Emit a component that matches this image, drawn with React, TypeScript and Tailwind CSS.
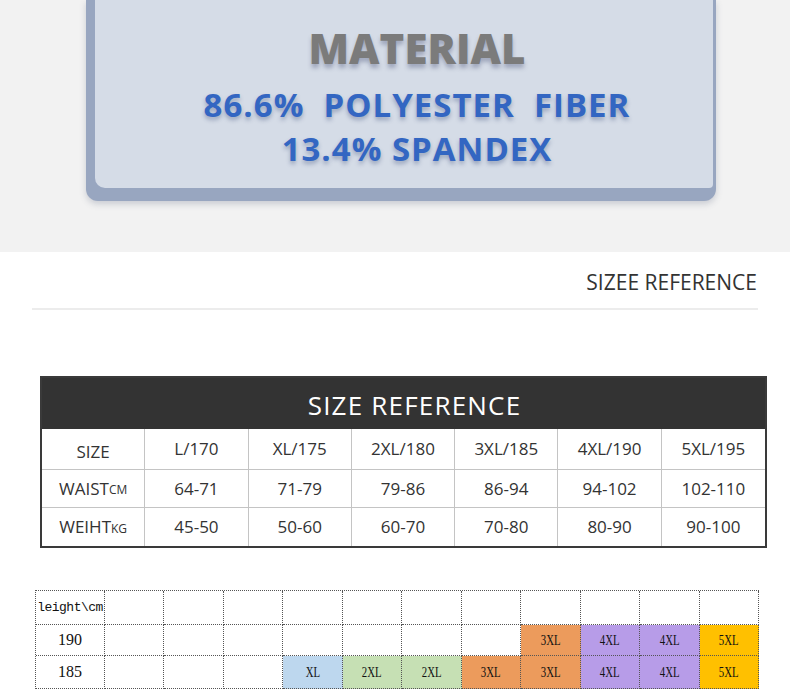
import React from "react";

const sizeCols = ["L/170", "XL/175", "2XL/180", "3XL/185", "4XL/190", "5XL/195"];
const waist = ["64-71", "71-79", "79-86", "86-94", "94-102", "102-110"];
const weight = ["45-50", "50-60", "60-70", "70-80", "80-90", "90-100"];

const colorMap: Record<string, string> = {
  XL: "bg-[#bdd7ee]",
  "2XL": "bg-[#c6e0b4]",
  "3XL": "bg-[#ec9b5c]",
  "4XL": "bg-[#b79ce8]",
  "5XL": "bg-[#ffc000]",
};

const gridRows: { label: string; cells: string[] }[] = [
  { label: "leight\\cm", cells: ["", "", "", "", "", "", "", "", "", "", ""] },
  { label: "190", cells: ["", "", "", "", "", "", "", "3XL", "4XL", "4XL", "5XL"] },
  { label: "185", cells: ["", "", "", "XL", "2XL", "2XL", "3XL", "3XL", "4XL", "4XL", "5XL"] },
];
const rowH = ["h-[34px]", "h-[31px]", "h-[33px]"];

export default function App() {
  return (
    <div className="w-[790px] h-[690px] overflow-hidden bg-white">
      {/* Material section */}
      <div className="h-[252px] bg-[#f2f2f2] pl-[86px]">
        <div className="w-[630px] h-[201px] bg-[#98a6c0] rounded-b-[12px] pl-[9px] pb-[13px] pr-[3px] shadow-[0_3px_6px_rgba(80,90,120,0.25)]">
          <div className="h-full bg-[#d5dce7] rounded-bl-[10px] rounded-br-[4px] flex flex-col items-center pt-[22px] pl-[26px]">
            <div className="font-['Open_Sans'] font-extrabold text-[42px] leading-[52px] text-[#7b7b7b] [text-shadow:0_4px_4px_rgba(60,70,110,0.35)]">
              MATERIAL
            </div>
            <div className="font-['Open_Sans'] font-bold text-[33px] leading-[44px] text-[#3366c2] mt-[9px] whitespace-pre tracking-[1px] [text-shadow:0_3px_4px_rgba(40,60,110,0.35)]">
              {"86.6%  POLYESTER  FIBER"}
            </div>
            <div className="font-['Open_Sans'] font-bold text-[33px] leading-[44px] text-[#3366c2] tracking-[1px] [text-shadow:0_3px_4px_rgba(40,60,110,0.35)]">
              13.4% SPANDEX
            </div>
          </div>
        </div>
      </div>

      {/* Sizee reference heading */}
      <div className="px-[32px] pt-[16px]">
        <div className="flex justify-end pr-[1px]">
          <span className="font-['Open_Sans'] text-[21px] leading-[28px] text-[#333]">
            SIZEE REFERENCE
          </span>
        </div>
        <div className="mt-[12px] h-[2px] bg-[#ececec]" />
      </div>

      {/* Size table */}
      <div className="mt-[66px] ml-[40px] w-[727px] border-2 border-[#3a3a3a] font-['Open_Sans'] text-[#333]">
        <div className="h-[51px] bg-[#333333] flex items-center justify-center">
          <span className="text-white text-[26px] tracking-[1.2px] leading-none pt-[2px] pl-[22px]">SIZE REFERENCE</span>
        </div>
        <div className="grid grid-cols-7 text-[17px]">
          <div className="h-[41px] flex items-end justify-center pb-[5px] border-r border-b border-[#c4c4c4]">SIZE</div>
          {sizeCols.map((s, i) => (
            <div
              key={s}
              className={`h-[41px] flex items-center justify-center border-b border-[#c4c4c4] ${i < 5 ? "border-r" : ""}`}
            >
              {s}
            </div>
          ))}
          <div className="h-[38px] flex items-center justify-center border-r border-b border-[#c4c4c4]">
            WAIST<span className="text-[12px] pt-[3px]">CM</span>
          </div>
          {waist.map((s, i) => (
            <div
              key={s}
              className={`h-[38px] flex items-center justify-center border-b border-[#c4c4c4] ${i < 5 ? "border-r" : ""}`}
            >
              {s}
            </div>
          ))}
          <div className="h-[38px] flex items-center justify-center border-r border-[#c4c4c4]">
            WEIHT<span className="text-[12px] pt-[3px]">KG</span>
          </div>
          {weight.map((s, i) => (
            <div
              key={s}
              className={`h-[38px] flex items-center justify-center border-[#c4c4c4] ${i < 5 ? "border-r" : ""}`}
            >
              {s}
            </div>
          ))}
        </div>
      </div>

      {/* Height chart */}
      <div className="mt-[42px] ml-[35px] w-[724px] grid grid-cols-[69px_repeat(11,1fr)] border-l border-t border-dotted border-[#555] font-['Liberation_Serif','Noto_Sans_CJK_SC',serif] text-[#111]">
        {gridRows.map((row, ri) => (
          <React.Fragment key={ri}>
            <div
              className={`${rowH[ri]} flex items-center justify-center border-r border-b border-dotted border-[#555] ${ri === 0 ? "font-['Liberation_Mono',monospace] text-[13px] tracking-[-0.5px]" : "text-[16px]"}`}
            >
              {row.label}
            </div>
            {row.cells.map((c, ci) => (
              <div
                key={ci}
                className={`${rowH[ri]} flex items-center justify-center border-r border-b border-dotted border-[#555] ${c ? colorMap[c] : ""}`}
              >
                {c ? <span className="inline-block text-[15px] scale-x-[0.72]">{c}</span> : null}
              </div>
            ))}
          </React.Fragment>
        ))}
      </div>
    </div>
  );
}
